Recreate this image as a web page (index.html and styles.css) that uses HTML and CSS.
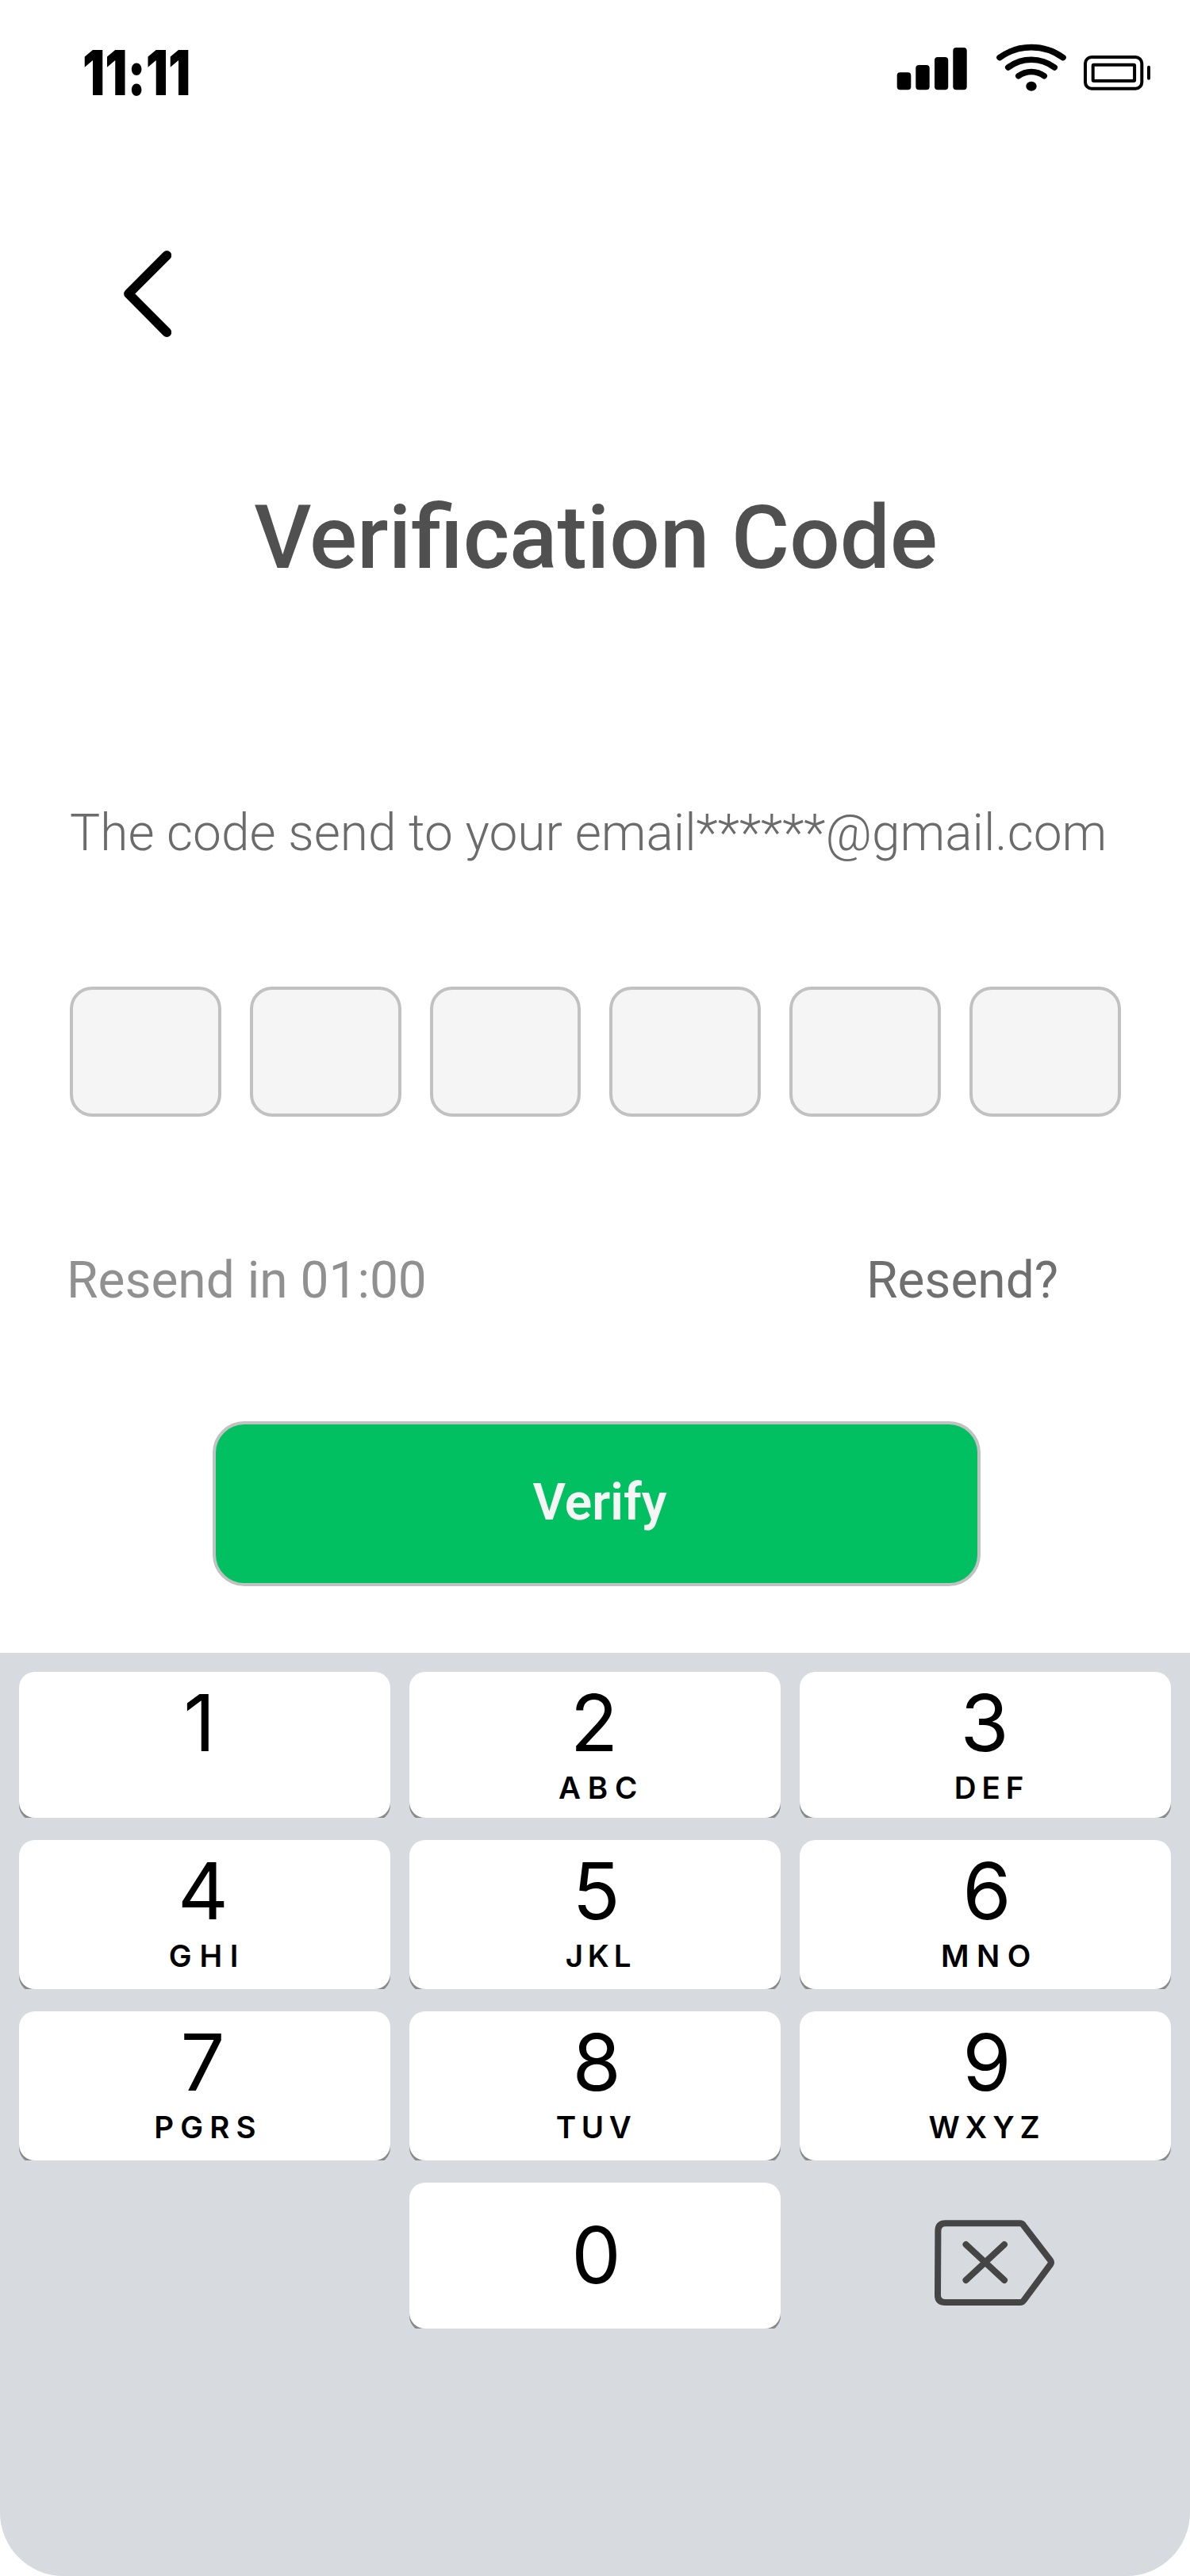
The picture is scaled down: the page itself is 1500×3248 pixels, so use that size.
FILE: index.html
```
<!DOCTYPE html>
<html lang="en">
<head>
<meta charset="utf-8">
<title>Verification Code</title>
<link rel="stylesheet" href="styles.css">
</head>
<body>
<div class="screen">
  <header class="status">
    <span class="status__time">11:11</span>
    <svg class="status__icons" viewBox="0 0 322 60" aria-hidden="true">
      <g fill="#000">
        <rect x="2.7" y="35.3" width="17.6" height="22" rx="4"/>
        <rect x="26.3" y="26" width="17.4" height="31.3" rx="4"/>
        <rect x="50" y="16" width="17.2" height="41.3" rx="4"/>
        <rect x="73.3" y="4" width="17.4" height="53.3" rx="4"/>
        <ellipse cx="172" cy="52.7" rx="6.7" ry="6"/>
      </g>
      <g fill="none" stroke="#000" stroke-linecap="round" stroke-width="7.6">
        <path d="M132 16.6A68 68 0 0 1 212 16.6"/>
        <path d="M142.8 29A48.4 48.4 0 0 1 201.2 29"/>
        <path d="M155.8 39.8A27.5 27.5 0 0 1 188.2 39.8"/>
      </g>
      <g fill="none" stroke="#000" stroke-width="4">
        <rect x="240" y="16" width="71.3" height="39.7" rx="8"/>
        <rect x="249.7" y="25.7" width="52.4" height="20.4" rx="1"/>
        <path d="M320 28.7V42.7" stroke-linecap="round"/>
      </g>
    </svg>
  </header>

  <a class="back" href="#" aria-label="Back">
    <svg viewBox="0 0 60 109" width="60" height="109">
      <path d="M54.3 6L6 54.3L54.3 103" fill="none" stroke="#000" stroke-width="11.8" stroke-linecap="round" stroke-linejoin="round"/>
    </svg>
  </a>

  <h1 class="title">Verification Code</h1>
  <p class="hint">The code send to your email******@gmail.com</p>

  <div class="code">
    <span class="code__cell"></span>
    <span class="code__cell"></span>
    <span class="code__cell"></span>
    <span class="code__cell"></span>
    <span class="code__cell"></span>
    <span class="code__cell"></span>
  </div>

  <div class="resend">
    <span class="resend__timer">Resend in 01:00</span>
    <a class="resend__link" href="#">Resend?</a>
  </div>

  <button class="verify" type="button">Verify</button>

  <div class="keypad">
    <div class="key key--1"><span class="key__digit">1</span></div>
    <div class="key key--2"><span class="key__digit">2</span><span class="key__label">ABC</span></div>
    <div class="key key--3"><span class="key__digit">3</span><span class="key__label">DEF</span></div>
    <div class="key key--4"><span class="key__digit">4</span><span class="key__label">GHI</span></div>
    <div class="key key--5"><span class="key__digit">5</span><span class="key__label">JKL</span></div>
    <div class="key key--6"><span class="key__digit">6</span><span class="key__label">MNO</span></div>
    <div class="key key--7"><span class="key__digit">7</span><span class="key__label">PGRS</span></div>
    <div class="key key--8"><span class="key__digit">8</span><span class="key__label">TUV</span></div>
    <div class="key key--9"><span class="key__digit">9</span><span class="key__label">WXYZ</span></div>
    <div class="key key--0"><span class="key__digit">0</span></div>
    <div class="delete">
      <svg viewBox="0 0 152 109" width="152" height="109" aria-label="Delete">
        <g fill="none" stroke="#454545" stroke-width="8" stroke-linejoin="round" stroke-linecap="round">
          <path d="M14 4.3H107.5Q110.8 4.3 112.4 7.2L146.2 51.2Q147.8 53.6 146.2 56L112.4 101.6Q110.8 104 107.5 104H14Q4 104 4 95L4.4 14Q4.4 4.3 14 4.3Z"/>
          <path d="M39.5 31L88 76M88 31L39.5 76"/>
        </g>
      </svg>
    </div>
  </div>
</div>
</body>
</html>
```
FILE: styles.css
```
* {
  box-sizing: border-box;
}

body {
  margin: 0;
  background: #fff;
  font-family: Roboto, "Liberation Sans", sans-serif;
}

.screen {
  display: flex;
  flex-direction: column;
  width: 1500px;
  height: 3248px;
  background: #fff;
  overflow: hidden;
}

.status {
  display: flex;
  justify-content: space-between;
  align-items: flex-start;
  height: 316px;
  padding: 52px 50px 0 103.5px;
}

.status__time {
  font: 900 78px/80px Inter, sans-serif;
  font-feature-settings: "calt" 0;
  color: #000;
  transform: scaleX(0.8);
  transform-origin: left;
}

.status__icons {
  width: 322px;
  height: 60px;
  margin-top: 4px;
  overflow: visible;
}

.back {
  align-self: flex-start;
  height: 109px;
  margin-left: 156px;
}

.back svg {
  display: block;
}

.title {
  margin: 187px 0 0 2px;
  font-size: 112px;
  font-weight: 500;
  line-height: 132px;
  text-align: center;
  color: #505050;
}

.hint {
  margin: 269px 88px 0;
  font-size: 64px;
  font-weight: 300;
  line-height: 76px;
  white-space: nowrap;
  color: #6b6b6b;
}

.code {
  display: grid;
  grid-template-columns: repeat(6, 1fr);
  gap: 36px;
  margin: 155px 87.5px 0 88px;
}

.code__cell {
  height: 164px;
  border: 4px solid #c1c1c1;
  border-radius: 28px;
  background: #f5f5f5;
}

.resend {
  display: flex;
  justify-content: space-between;
  margin: 169px 166px 0 84px;
  font-size: 64px;
  line-height: 76px;
}

.resend__timer {
  color: #909090;
}

.resend__link {
  color: #6f6f6f;
  text-decoration: none;
}

.verify {
  width: 968px;
  height: 208px;
  margin: 139px 0 0 268px;
  padding: 0 0 2px 8px;
  border: 4px solid #c1c1c1;
  border-radius: 40px;
  background: #00c062;
  font: 600 64px/76px Roboto, "Liberation Sans", sans-serif;
  color: #f5f5f5;
}

.keypad {
  display: grid;
  grid-template-columns: repeat(3, 468px);
  grid-template-rows: 184px 188px 188px 184px;
  gap: 28px 24px;
  flex: 1;
  align-content: start;
  margin-top: 84px;
  padding: 24px;
  border-radius: 0 0 80px 80px;
  background: #d7dadf;
}

/* the shadow shows only at the rounded bottom corners */
.key {
  display: flex;
  flex-direction: column;
  align-items: center;
  padding-top: 14px;
  border-radius: 20px;
  background: #fff;
  box-shadow: 0 4px 0 #88898b;
  clip-path: inset(0);
  font-family: Inter, sans-serif;
  color: #000;
}

.key__digit {
  margin-left: var(--digit-nudge, 0);
  font-size: 99px;
  line-height: 100px;
}

.key__label {
  margin: 9px 0 0 var(--label-nudge, 0);
  font-size: 38.5px;
  font-weight: 600;
  line-height: 46px;
  letter-spacing: var(--tracking, 8px);
}

.key--1 { --digit-nudge: -13px; }
.key--2 { --digit-nudge: -2px; --tracking: 8.8px; --label-nudge: 16px; }
.key--3 { --digit-nudge: -2px; --tracking: 7px; --label-nudge: 16px; }
.key--4 { --digit-nudge: -4px; --tracking: 9.7px; --label-nudge: 7px; }
.key--5 { --digit-nudge: 3px; --tracking: 5.8px; --label-nudge: 14px; }
.key--6 { --digit-nudge: 4px; --tracking: 9.6px; --label-nudge: 11px; }
.key--7 { --digit-nudge: -5px; --tracking: 8.2px; --label-nudge: 9px; }
.key--8 { --digit-nudge: 4px; --tracking: 6.6px; --label-nudge: 3px; }
.key--9 { --digit-nudge: 4px; --tracking: 6.9px; --label-nudge: 4px; }

.key--0 {
  --digit-nudge: 3px;
  grid-column: 2;
  padding-top: 41px;
}

.delete {
  padding: 47px 0 0 169.5px;
}

.delete svg {
  display: block;
}
```
